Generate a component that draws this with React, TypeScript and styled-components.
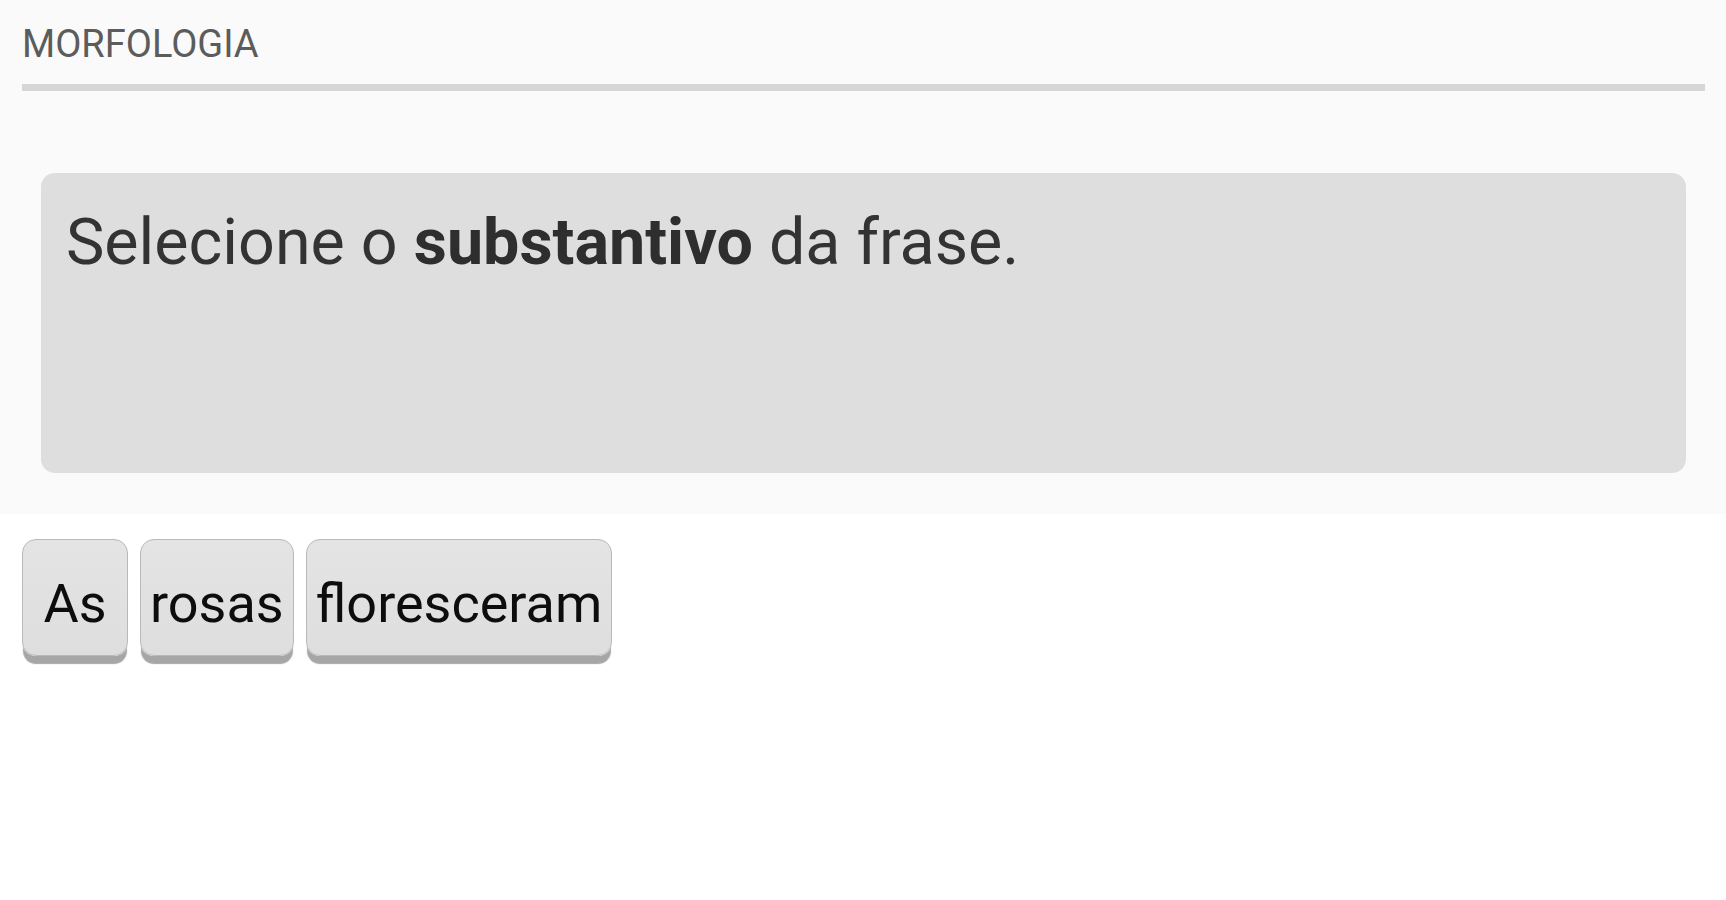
import React from "react";
import styled, { createGlobalStyle } from "styled-components";

const GlobalStyle = createGlobalStyle`
  html, body {
    margin: 0;
    padding: 0;
    background: #ffffff;
    font-family: Roboto, "Noto Sans", "Liberation Sans", sans-serif;
  }
  * { box-sizing: border-box; }
`;

const Page = styled.div`
  width: 1726px;
  min-height: 900px;
  background: #ffffff;
`;

const QuestionSection = styled.section`
  background: #fafafa;
  padding: 22px 21px 41px 22px;
`;

const Category = styled.div`
  font-size: 38px;
  line-height: normal;
  color: #5c5c5c;
  text-transform: uppercase;
`;

const Divider = styled.div`
  height: 7px;
  margin-top: 18px;
  background: #d6d6d6;
`;

const Prompt = styled.div`
  margin: 82px 19px 0 19px;
  height: 300px;
  background: #dedede;
  border-radius: 14px;
  padding: 31px 25px;
  font-size: 64.6px;
  line-height: normal;
  color: #333333;
`;

const Strong = styled.strong`
  font-weight: 700;
  color: #2e2e2e;
`;

const WordRow = styled.div`
  display: flex;
  gap: 12px;
  padding: 25px 22px;
  align-items: flex-start;
`;

const WordButton = styled.button`
  min-width: 106px;
  height: 117px;
  padding: 32px 9px 0 9px;
  display: flex;
  justify-content: center;
  align-items: flex-start;
  font-family: Roboto, "Noto Sans", "Liberation Sans", sans-serif;
  font-size: 54px;
  line-height: normal;
  color: #0d0d0d;
  background: linear-gradient(#e4e4e4, #dedede);
  border: 1.5px solid #b9b9b9;
  border-radius: 14px;
  box-shadow: 0 9px 1px -1px #a6a6a6;
  cursor: pointer;
`;

const words = ["As", "rosas", "floresceram"];

export default function App() {
  return (
    <>
      <GlobalStyle />
      <Page>
        <QuestionSection>
          <Category>MORFOLOGIA</Category>
          <Divider />
          <Prompt>
            Selecione o <Strong>substantivo</Strong> da frase.
          </Prompt>
        </QuestionSection>
        <WordRow>
          {words.map((w) => (
            <WordButton key={w}>{w}</WordButton>
          ))}
        </WordRow>
      </Page>
    </>
  );
}
